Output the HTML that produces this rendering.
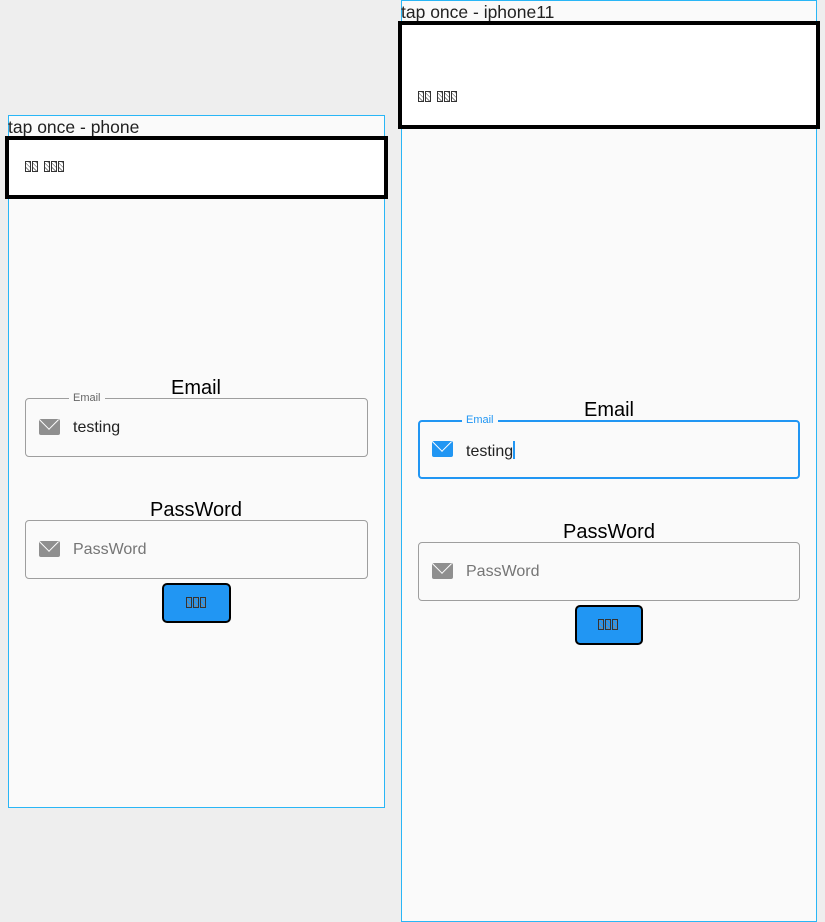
<!DOCTYPE html>
<html><head><meta charset="utf-8">
<style>
*{box-sizing:border-box;margin:0;padding:0}
body{width:825px;height:922px;background:#eeeeee;position:relative;overflow:hidden;font-family:"Liberation Sans","NanumGothic",sans-serif;color:#111}
.frame{position:absolute;border:1px solid #29b6f6;background:#fafafa}
.title{position:absolute;font-size:17.5px;color:#222;white-space:nowrap}
.bbox{position:absolute;border:4px solid #000;background:#fff}
.tofu{position:absolute;display:flex;gap:1px;align-items:center}
.t{display:inline-block;width:6px;height:11px;border:1px solid #333;color:transparent;font-size:1px;overflow:hidden;background:repeating-linear-gradient(45deg,transparent 0 2px,#888 2px 3px)}
.sp{display:inline-block;width:4px}
.lab{position:absolute;font-size:20px;color:#000;text-align:center;transform:translateX(-50%);white-space:nowrap}
.field{position:absolute;border:1px solid #9e9e9e;border-radius:4px}
.field.f{border:2px solid #2196f3}
.fl{position:absolute;font-size:11px;background:#fafafa;padding:0 4px;color:#666;top:-8px;left:43px;line-height:14px}
.f .fl{color:#2196f3;left:42px;top:-9px}
.ic{position:absolute;left:13px;top:20px;width:21px;height:16px;background:#8f8f8f;border-radius:2px;overflow:hidden}
.f .ic{background:#2196f3;left:12px;top:19px}
.ic:after{content:"";position:absolute;left:3px;top:-6px;width:13px;height:13px;border-right:1.5px solid #fff;border-bottom:1.5px solid #fff;transform:rotate(45deg)}
.val{position:absolute;left:47px;top:20px;font-size:16px;color:#222}
.f .val{left:46px;top:19px}
.ph{color:#757575}
.btn{position:absolute;background:#2196f3;border:2px solid #000;border-radius:5px}
</style></head><body>

<div class="frame" style="left:8px;top:115px;width:377px;height:693px"></div>
<div class="title" style="left:8px;top:117px">tap once - phone</div>
<div class="bbox" style="left:5px;top:136px;width:383px;height:63px"></div>
<div class="tofu" style="left:25px;top:161px"><span class="t">확</span><span class="t">인</span><span class="sp"></span><span class="t">테</span><span class="t">스</span><span class="t">트</span></div>
<div class="lab" style="left:196px;top:377px">Email</div>
<div class="field" style="left:25px;top:398px;width:343px;height:59px">
 <div class="fl">Email</div><div class="ic"></div><div class="val">testing</div></div>
<div class="lab" style="left:196px;top:499px">PassWord</div>
<div class="field" style="left:25px;top:520px;width:343px;height:59px">
 <div class="ic"></div><div class="val ph">PassWord</div></div>
<div class="btn" style="left:162px;top:583px;width:69px;height:40px"></div>
<div class="tofu" style="left:186px;top:597px"><span class="t">로</span><span class="t">그</span><span class="t">인</span></div>

<div class="frame" style="left:401px;top:0px;width:416px;height:922px"></div>
<div class="title" style="left:401px;top:2px">tap once - iphone11</div>
<div class="bbox" style="left:398px;top:21px;width:422px;height:108px"></div>
<div class="tofu" style="left:418px;top:91px"><span class="t">확</span><span class="t">인</span><span class="sp"></span><span class="t">테</span><span class="t">스</span><span class="t">트</span></div>
<div class="lab" style="left:609px;top:399px">Email</div>
<div class="field f" style="left:418px;top:420px;width:382px;height:59px">
 <div class="fl">Email</div><div class="ic"></div><div class="val">testing<span style="display:inline-block;width:2px;height:18px;background:#2196f3;vertical-align:-3px"></span></div></div>
<div class="lab" style="left:609px;top:521px">PassWord</div>
<div class="field" style="left:418px;top:542px;width:382px;height:59px">
 <div class="ic"></div><div class="val ph">PassWord</div></div>
<div class="btn" style="left:575px;top:605px;width:68px;height:40px"></div>
<div class="tofu" style="left:598px;top:619px"><span class="t">로</span><span class="t">그</span><span class="t">인</span></div>

</body></html>
